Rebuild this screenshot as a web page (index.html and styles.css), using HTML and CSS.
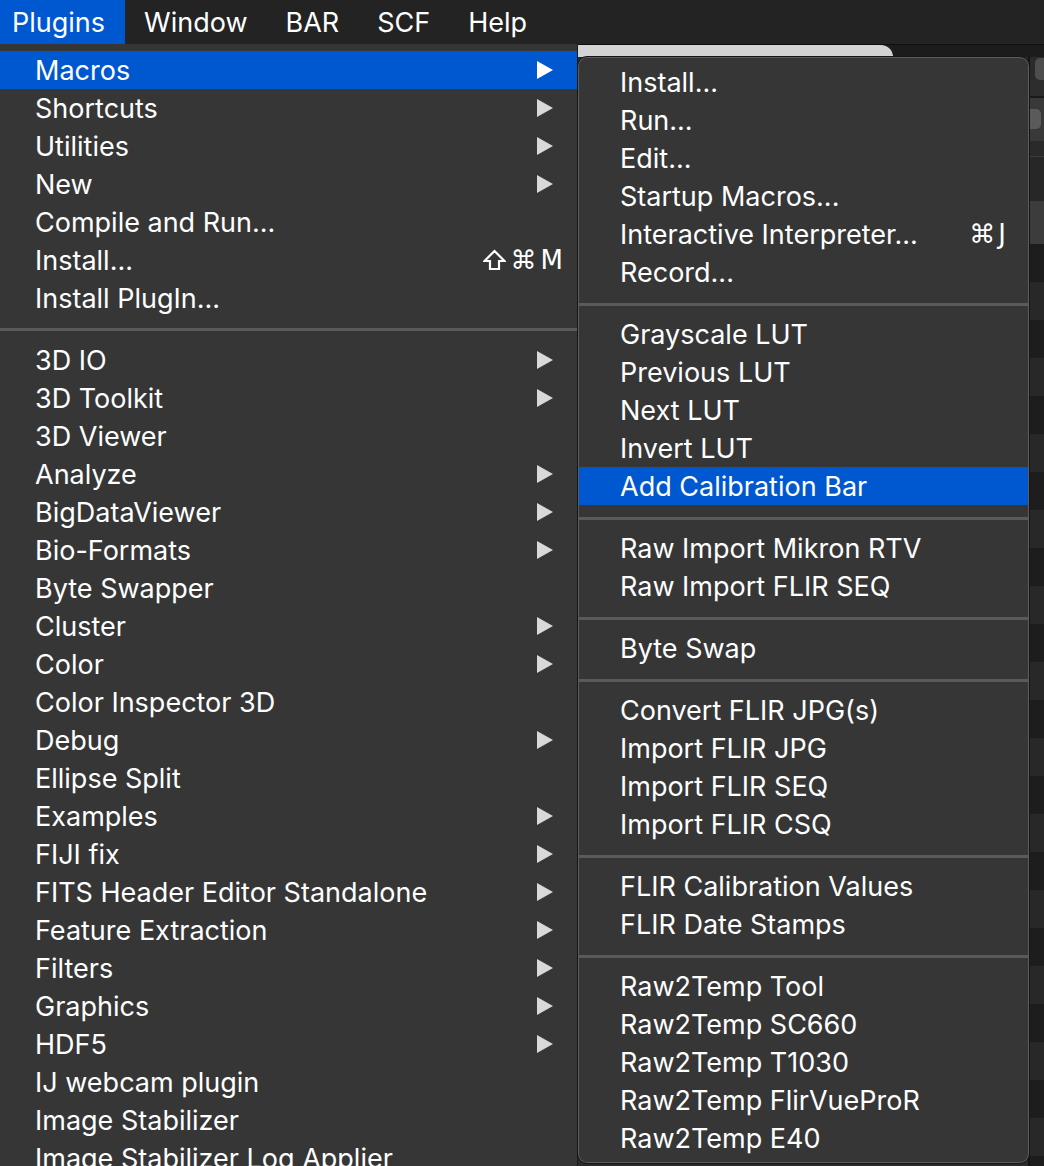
FILE: index.html
```html
<!DOCTYPE html>
<html lang="en">
<head>
<meta charset="utf-8">
<title>Plugins menu</title>
<link rel="stylesheet" href="styles.css">
</head>
<body>
<header class="menubar">
  <span class="mb-item mb-active">Plugins</span>
  <span class="mb-item">Window</span>
  <span class="mb-item">BAR</span>
  <span class="mb-item">SCF</span>
  <span class="mb-item">Help</span>
</header>
<div class="stage">
  <nav class="menu main-menu">
    <div class="row active"><span class="label">Macros</span><span class="arrow"></span></div>
    <div class="row"><span class="label">Shortcuts</span><span class="arrow"></span></div>
    <div class="row"><span class="label">Utilities</span><span class="arrow"></span></div>
    <div class="row"><span class="label">New</span><span class="arrow"></span></div>
    <div class="row"><span class="label">Compile and Run...</span></div>
    <div class="row"><span class="label">Install...</span><span class="shortcut"><svg class="shift" width="23" height="22" viewBox="0 0 23 22" aria-label="Shift"><path d="M11.5 2 L21.5 12 L16 12 L16 20 L7 20 L7 12 L1.5 12 Z" fill="none" stroke="#ffffff" stroke-width="2.2" stroke-linejoin="miter"/></svg><span class="key">⌘</span><span class="key">M</span></span></div>
    <div class="row"><span class="label">Install PlugIn...</span></div>
    <div class="sep"></div>
    <div class="row"><span class="label">3D IO</span><span class="arrow"></span></div>
    <div class="row"><span class="label">3D Toolkit</span><span class="arrow"></span></div>
    <div class="row"><span class="label">3D Viewer</span></div>
    <div class="row"><span class="label">Analyze</span><span class="arrow"></span></div>
    <div class="row"><span class="label">BigDataViewer</span><span class="arrow"></span></div>
    <div class="row"><span class="label">Bio-Formats</span><span class="arrow"></span></div>
    <div class="row"><span class="label">Byte Swapper</span></div>
    <div class="row"><span class="label">Cluster</span><span class="arrow"></span></div>
    <div class="row"><span class="label">Color</span><span class="arrow"></span></div>
    <div class="row"><span class="label">Color Inspector 3D</span></div>
    <div class="row"><span class="label">Debug</span><span class="arrow"></span></div>
    <div class="row"><span class="label">Ellipse Split</span></div>
    <div class="row"><span class="label">Examples</span><span class="arrow"></span></div>
    <div class="row"><span class="label">FIJI fix</span><span class="arrow"></span></div>
    <div class="row"><span class="label">FITS Header Editor Standalone</span><span class="arrow"></span></div>
    <div class="row"><span class="label">Feature Extraction</span><span class="arrow"></span></div>
    <div class="row"><span class="label">Filters</span><span class="arrow"></span></div>
    <div class="row"><span class="label">Graphics</span><span class="arrow"></span></div>
    <div class="row"><span class="label">HDF5</span><span class="arrow"></span></div>
    <div class="row"><span class="label">IJ webcam plugin</span></div>
    <div class="row"><span class="label">Image Stabilizer</span></div>
    <div class="row"><span class="label">Image Stabilizer Log Applier</span></div>
  </nav>
  <div class="backdrop">
    <div class="bd-top">
      <div class="bd-tab"></div>
      <div class="bd-dark"></div>
    </div>
    <div class="bd-body">
      <div class="bd-strip">
        <div class="bs bs-a"><span class="bs-btn"></span></div>
        <div class="bs bs-b"></div>
        <div class="bs bs-c"><span class="bs-knob"></span></div>
        <div class="bs bs-d"></div>
        <div class="bs bs-e"></div>
        <div class="bs bs-f"></div>
        <div class="bs bs-rows"></div>
      </div>
    </div>
  </div>
  <nav class="menu submenu">
    <div class="row"><span class="label">Install...</span></div>
    <div class="row"><span class="label">Run...</span></div>
    <div class="row"><span class="label">Edit...</span></div>
    <div class="row"><span class="label">Startup Macros...</span></div>
    <div class="row"><span class="label">Interactive Interpreter...</span><span class="shortcut"><span class="key">⌘</span><span class="key">J</span></span></div>
    <div class="row"><span class="label">Record...</span></div>
    <div class="sep"></div>
    <div class="row"><span class="label">Grayscale LUT</span></div>
    <div class="row"><span class="label">Previous LUT</span></div>
    <div class="row"><span class="label">Next LUT</span></div>
    <div class="row"><span class="label">Invert LUT</span></div>
    <div class="row active"><span class="label">Add Calibration Bar</span></div>
    <div class="sep"></div>
    <div class="row"><span class="label">Raw Import Mikron RTV</span></div>
    <div class="row"><span class="label">Raw Import FLIR SEQ</span></div>
    <div class="sep"></div>
    <div class="row"><span class="label">Byte Swap</span></div>
    <div class="sep"></div>
    <div class="row"><span class="label">Convert FLIR JPG(s)</span></div>
    <div class="row"><span class="label">Import FLIR JPG</span></div>
    <div class="row"><span class="label">Import FLIR SEQ</span></div>
    <div class="row"><span class="label">Import FLIR CSQ</span></div>
    <div class="sep"></div>
    <div class="row"><span class="label">FLIR Calibration Values</span></div>
    <div class="row"><span class="label">FLIR Date Stamps</span></div>
    <div class="sep"></div>
    <div class="row"><span class="label">Raw2Temp Tool</span></div>
    <div class="row"><span class="label">Raw2Temp SC660</span></div>
    <div class="row"><span class="label">Raw2Temp T1030</span></div>
    <div class="row"><span class="label">Raw2Temp FlirVueProR</span></div>
    <div class="row"><span class="label">Raw2Temp E40</span></div>
  </nav>
</div>
</body>
</html>
```

FILE: styles.css
```css
* { box-sizing: border-box; }

html, body {
  margin: 0;
  padding: 0;
  height: 100%;
  overflow: hidden;
}

body {
  background: #222222;
  color: #ffffff;
  font-family: "Inter", "Noto Sans", "DejaVu Sans", sans-serif;
  font-size: 27px;
}

/* ---------- menubar ---------- */
.menubar {
  display: flex;
  height: 44px;
  background: #232323;
  align-items: stretch;
}

.mb-item {
  display: flex;
  align-items: center;
  padding: 0 19px;
  color: #ffffff;
}

.mb-item:first-child {
  padding-left: 12px;
  padding-right: 20px;
}

.mb-active {
  background: #0058d0;
}

/* ---------- stage ---------- */
.stage {
  position: relative;
  display: flex;
  height: calc(100vh - 44px);
  overflow: hidden;
}

.menu {
  background: #363636;
}

.main-menu {
  width: 578px;
  flex: none;
  padding-top: 7px;
  border-right: 1px solid #1b1b1b;
  overflow: hidden;
}

.row {
  display: flex;
  align-items: center;
  height: 38px;
  padding-left: 35px;
  white-space: nowrap;
}

.row .label {
  flex: 1;
}

.row.active {
  background: #0058d0;
}

.arrow {
  width: 0;
  height: 0;
  margin-right: 24px;
  border-top: 9px solid transparent;
  border-bottom: 9px solid transparent;
  border-left: 16px solid #d9d9d9;
}

.row.active .arrow {
  border-left-color: #ffffff;
}

.shortcut {
  display: flex;
  align-items: center;
  gap: 4px;
  margin-right: 14px;
  font-family: "DejaVu Sans", "Inter", sans-serif;
  font-size: 26px;
}

.shift {
  display: block;
  margin-right: 1px;
}

.key {
  display: block;
}

.sep {
  height: 24px;
  padding-top: 11px;
}

.sep::before {
  content: "";
  display: block;
  height: 3px;
  background: #5a5a5a;
}

/* ---------- submenu ---------- */
.submenu {
  position: absolute;
  left: 577px;
  top: 12px;
  width: 453px;
  height: 1108px;
  padding: 6px 1px;
  border: 1px solid #161616;
  border-radius: 10px;
  box-shadow: inset 0 0 0 1px #5c5c5c;
  overflow: hidden;
}

.submenu .row {
  padding-left: 41px;
}

.submenu .sep {
  padding-top: 12px;
}

.submenu .shortcut {
  gap: 3px;
  margin-right: 22px;
}

/* ---------- window behind ---------- */
.backdrop {
  flex: 1;
  display: flex;
  flex-direction: column;
  background: #1d1d1d;
}

.bd-top {
  display: flex;
  height: 13px;
  border-top: 1px solid #0f0f0f;
}

.bd-tab {
  width: 315px;
  background: #d4d4d4;
  border-top-right-radius: 12px;
}

.bd-dark {
  flex: 1;
  background: #1c1c1c;
}

.bd-body {
  flex: 1;
  display: flex;
  justify-content: flex-end;
  background: #2a2a2a;
}

.bd-strip {
  width: 16px;
  display: flex;
  flex-direction: column;
  border-left: 2px solid #141414;
}

.bs { flex: none; }

.bs-a {
  height: 23px;
  background: #2a2a2a;
  display: flex;
  justify-content: flex-end;
  padding-top: 1px;
}

.bs-btn {
  width: 9px;
  height: 22px;
  background: #4d4d4d;
  border-radius: 5px 0 0 5px;
}

.bs-b {
  height: 18px;
  background: #2d2d2d;
  border-bottom: 2px solid #1a1a1a;
}

.bs-c {
  height: 43px;
  background: #393939;
  padding-top: 11px;
}

.bs-knob {
  display: block;
  width: 11px;
  height: 20px;
  background: #5a5a5a;
  border-radius: 0 5px 5px 0;
}

.bs-d {
  height: 15px;
  background: #2a2a2a;
}

.bs-e {
  height: 45px;
  background: #272727;
  border-top: 1px solid #3c3c3c;
}

.bs-f {
  height: 43px;
  background: #3c3c3c;
}

.bs-rows {
  flex: 1;
  background: repeating-linear-gradient(to bottom,
    #1d1d1d 0, #1d1d1d 38px,
    #282828 38px, #282828 76px);
}
```
